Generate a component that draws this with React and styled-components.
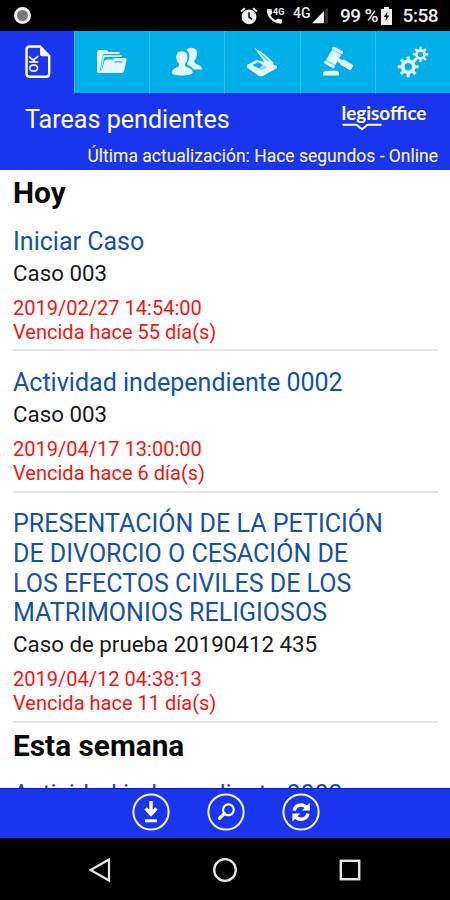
import styled, { createGlobalStyle, css } from "styled-components";

const sections = [
  {
    title: "Hoy",
    tasks: [
      {
        name: ["Iniciar Caso"],
        matter: "Caso 003",
        date: "2019/02/27 14:54:00",
        due: "Vencida hace 55 día(s)",
      },
      {
        name: ["Actividad independiente 0002"],
        matter: "Caso 003",
        date: "2019/04/17 13:00:00",
        due: "Vencida hace 6 día(s)",
      },
      {
        name: [
          "PRESENTACIÓN DE LA PETICIÓN",
          "DE DIVORCIO O CESACIÓN DE",
          "LOS EFECTOS CIVILES DE LOS",
          "MATRIMONIOS RELIGIOSOS",
        ],
        matter: "Caso de prueba 20190412 435",
        date: "2019/04/12 04:38:13",
        due: "Vencida hace 11 día(s)",
      },
    ],
  },
  {
    title: "Esta semana",
    tasks: [{ name: ["Actividad independiente 0003"] }],
  },
];

function gearPath(cx, cy, outer, inner, teeth) {
  const step = (Math.PI * 2) / teeth;
  const point = (r, a) =>
    `${(cx + r * Math.cos(a)).toFixed(2)} ${(cy + r * Math.sin(a)).toFixed(2)}`;
  let d = "";
  for (let i = 0; i < teeth; i++) {
    const a = i * step;
    d += `${i ? "L" : "M"}${point(inner, a - step * 0.27)}L${point(outer, a - step * 0.18)}`;
    d += `L${point(outer, a + step * 0.18)}L${point(inner, a + step * 0.27)}`;
  }
  return d + "Z";
}

function TaskIcon() {
  return (
    <Icon width="26" height="34" viewBox="0 0 26 34">
      <path
        d="M4.8 1.5H15L24.2 11V28.5Q24.2 31.8 20.9 31.8H4.8Q1.5 31.8 1.5 28.5V4.8Q1.5 1.5 4.8 1.5Z"
        fill="none"
        stroke="#fff"
        strokeWidth="2.4"
      />
      <path d="M15 2L24 11.2H17Q15 11.2 15 9Z" fill="#fff" />
      <OkText transform="translate(12.8 27.6) rotate(-90)" textLength="17" lengthAdjust="spacingAndGlyphs">
        OK
      </OkText>
    </Icon>
  );
}

function FolderIcon() {
  return (
    <Icon width="32" height="26" viewBox="0 0 32 26">
      <path
        d="M1 22V3Q1 1 3 1H10Q12 1 12.5 3H23.5V5H9Q6.5 5 6.2 8L4 22Z"
        fill="#e2f7ff"
      />
      <path d="M8 6.3H25.5V8H9.7Q8.2 8 7.8 10L5.4 22H4.5L6.8 8Q7 6.3 8 6.3Z" fill="#e2f7ff" />
      <path
        d="M11 10.5H17L19 9H29Q31 9 30.6 11L28 22Q27.5 24 25.5 24H3Q1 24 1 22H4.5Q5.8 22 6.2 20L8.2 12.5Q8.8 10.5 11 10.5Z"
        fill="#e2f7ff"
      />
      <path d="M18.5 12.8H26.5" stroke="#35b9e9" strokeWidth="1.4" />
    </Icon>
  );
}

function PeopleIcon() {
  return (
    <Icon width="32" height="30" viewBox="0 0 32 30">
      <path
        d="M15.5 3Q17 0.8 20.5 0.8Q26.2 1 26 7Q25.8 11 23.5 13.5V15.2Q24.5 17 28 18.2Q31 19.5 31 22.5H22.5Q21 19.5 17.3 18.3Q16 17.8 16 16.5Q18.5 13.5 18.4 9Q18.2 5 15.5 3Z"
        fill="#e2f7ff"
      />
      <path
        d="M10.8 4.2Q16.5 4.2 16.5 10.5Q16.3 14.5 14 17V18.8Q15 20.2 18.5 21.3Q21.8 22.8 21.8 25.5Q20.5 28.5 10.8 28.5Q1 28.5 .7 25.5Q1 22.5 4 21.3Q7.2 20.2 8 18.8V17Q5.2 14.3 5.2 10.5Q5.2 4.2 10.8 4.2Z"
        fill="#e2f7ff"
      />
    </Icon>
  );
}

function ScannerIcon() {
  return (
    <Icon width="32" height="30" viewBox="0 0 32 30">
      <path d="M1 18L11 12.8L31 19V21L16.5 29.2H13L1 20.6Z" fill="#e2f7ff" />
      <path d="M6.6 18L12 15L17 18L13.2 21.8Z" fill="#00aee8" />
      <path d="M18.2 18L21 20.6L15.6 23.4L13.6 22Z" fill="#8fdbf8" />
      <path d="M8 .8L18.6 7.2L27.4 15.6V18.4L19.6 16.4L11 4.6Z" fill="#e2f7ff" />
      <path d="M12.6 5L18 8.6L24.2 15L20.6 13.4Z" fill="#58c9f2" />
    </Icon>
  );
}

function GavelIcon() {
  return (
    <Icon width="32" height="30" viewBox="0 0 32 30">
      <g transform="translate(12 10.6) rotate(30)" fill="#e2f7ff">
        <rect x="-6.3" y="-9.8" width="11.6" height="3.2" rx="1" />
        <rect x="-5.6" y="-5.8" width="10.4" height="11.6" />
        <rect x="-6.3" y="6.6" width="11.6" height="3.2" rx="1" />
        <rect x="4.5" y="-1.8" width="6" height="3.6" />
        <rect x="8.5" y="-3.2" width="12.2" height="6.2" rx="1" />
      </g>
      <g transform="translate(12 10.6) rotate(30)" fill="#9be1fa">
        <rect x="-5.6" y="-6.6" width="10.4" height="0.9" />
        <rect x="-5.6" y="5.7" width="10.4" height="0.9" />
      </g>
      <path d="M3 23.8H15.5L17 25.8V28.4H1V25.8Z" fill="#e2f7ff" />
    </Icon>
  );
}

function GearsIcon() {
  return (
    <Icon width="32" height="32" viewBox="0 0 32 32">
      <path d={gearPath(11.2, 20.8, 10.5, 7.4, 8)} fill="#e2f7ff" />
      <circle cx="11.2" cy="20.8" r="3.7" fill="#00aee8" />
      <path d={gearPath(23.5, 8.4, 7.8, 5.4, 8)} fill="#e2f7ff" />
      <circle cx="23.5" cy="8.4" r="2.7" fill="#00aee8" />
    </Icon>
  );
}

const tabs = [
  { id: "tareas", icon: TaskIcon },
  { id: "carpetas", icon: FolderIcon },
  { id: "clientes", icon: PeopleIcon },
  { id: "escaner", icon: ScannerIcon },
  { id: "juzgados", icon: GavelIcon },
  { id: "ajustes", icon: GearsIcon },
];

function StatusIcons() {
  return (
    <>
      <Icon width="18" height="18" viewBox="0 0 18 18">
        <circle cx="9" cy="9.8" r="7.4" fill="#eee" />
        <path d="M1 4.5L4.8 1.2M17 4.5L13.2 1.2" stroke="#eee" strokeWidth="1.9" />
        <path d="M9 5.2V10L12 12.2" stroke="#222" strokeWidth="1.7" fill="none" />
      </Icon>
      <CallIcon width="20" height="18" viewBox="0 0 20 18">
        <path
          d="M2.2 2H5.4L6.5 6L4.6 8.2Q6.3 11.6 9.5 13.2L11.8 11.4L15.8 12.4V15.8Q15.8 16.8 14.5 16.8Q8.8 16.5 5 12.6Q1 8.5 .8 3.4Q.8 2 2.2 2Z"
          fill="#eee"
        />
        <CallText x="7" y="7.6">
          4G
        </CallText>
      </CallIcon>
      <Network>4G</Network>
      <Signal width="17" height="16" viewBox="0 0 17 16">
        <path d="M0 15.2L12 3V15.2Z" fill="#eee" />
        <path d="M13 2L16 0V15.2H13Z" fill="#333" />
      </Signal>
    </>
  );
}

export default function App() {
  return (
    <>
      <GlobalStyle />
      <Phone>
        <StatusBar>
          <Recording />
          <StatusIcons />
          <Percent>99 %</Percent>
          <Icon width="11" height="18" viewBox="0 0 11 18">
            <path d="M3 0H8V2H11V18H0V2H3Z" fill="#eee" />
            <path d="M6.6 4.5L2.8 10H5L4.4 14.3L8.3 8.6H6Z" fill="#111" />
          </Icon>
          <Clock>5:58</Clock>
        </StatusBar>
        <Tabs>
          {tabs.map(({ id, icon: TabIcon }) => (
            <Tab key={id} $active={id === "tareas"} aria-label={id}>
              <TabIcon />
            </Tab>
          ))}
        </Tabs>
        <Header>
          <HeaderRow>
            <PageTitle>Tareas pendientes</PageTitle>
            <Brand>
              <BrandName>legisoffice</BrandName>
              <Icon width="40" height="8" viewBox="0 0 40 8">
                <path d="M.5 1.8H14.5L20 6.2L25.5 1.8H39.5" fill="none" stroke="#fff" strokeWidth="2" />
              </Icon>
            </Brand>
          </HeaderRow>
          <Updated>Última actualización: Hace segundos - Online</Updated>
        </Header>
        <TaskList>
          {sections.map((section) => (
            <section key={section.title}>
              <SectionTitle>{section.title}</SectionTitle>
              {section.tasks.map((task) => (
                <Task key={task.name[0]}>
                  <TaskName>
                    {task.name.map((line) => (
                      <TaskLine key={line}>{line}</TaskLine>
                    ))}
                  </TaskName>
                  {task.matter && (
                    <>
                      <Matter>{task.matter}</Matter>
                      <Due>{task.date}</Due>
                      <Due>{task.due}</Due>
                    </>
                  )}
                </Task>
              ))}
            </section>
          ))}
        </TaskList>
        <Actions>
          <RoundButton aria-label="Descargar">
            <Icon width="38" height="38" viewBox="0 0 38 38">
              <circle cx="19" cy="19" r="17.6" fill="none" stroke="#f4f6ff" strokeWidth="2" />
              <path d="M19 8V20M13.6 15.3L19 21.3L24.4 15.3" fill="none" stroke="#fff" strokeWidth="3.4" />
              <path d="M13 27.8H25" stroke="#fff" strokeWidth="3" />
            </Icon>
          </RoundButton>
          <RoundButton aria-label="Buscar">
            <Icon width="38" height="38" viewBox="0 0 38 38">
              <circle cx="19" cy="19" r="17.6" fill="none" stroke="#f4f6ff" strokeWidth="2" />
              <circle cx="21.4" cy="16.8" r="5.4" fill="none" stroke="#fff" strokeWidth="2.2" />
              <path d="M17.3 20.6L12.6 25.3" stroke="#fff" strokeWidth="3.4" strokeLinecap="round" />
            </Icon>
          </RoundButton>
          <RoundButton aria-label="Actualizar">
            <Icon width="38" height="38" viewBox="0 0 38 38">
              <circle cx="19" cy="19" r="17.6" fill="none" stroke="#f4f6ff" strokeWidth="2" />
              <path d="M12 17.6Q13.4 12 19.2 12Q22.4 12 24.4 14.6" fill="none" stroke="#fff" strokeWidth="3.4" />
              <path d="M27.8 9.8V17.6H20Z" fill="#fff" />
              <path d="M26 20.6Q24.6 26.2 18.8 26.2Q15.6 26.2 13.6 23.6" fill="none" stroke="#fff" strokeWidth="3.4" />
              <path d="M10.4 28.4V20.6H18.2Z" fill="#fff" />
            </Icon>
          </RoundButton>
        </Actions>
        <NavBar>
          <Icon width="26" height="26" viewBox="0 0 26 26">
            <path d="M22 2.5V23.5L3.6 13Z" fill="none" stroke="#e6e6e6" strokeWidth="2.2" />
          </Icon>
          <Icon width="26" height="26" viewBox="0 0 26 26">
            <circle cx="13" cy="13" r="10.8" fill="none" stroke="#e6e6e6" strokeWidth="2.3" />
          </Icon>
          <Icon width="26" height="26" viewBox="0 0 26 26">
            <rect x="3.8" y="3.8" width="18.4" height="18.4" fill="none" stroke="#e6e6e6" strokeWidth="2.4" />
          </Icon>
        </NavBar>
      </Phone>
    </>
  );
}

const GlobalStyle = createGlobalStyle`
  * {
    box-sizing: border-box;
  }
  body {
    margin: 0;
    background: #000;
    font-family: Roboto, sans-serif;
  }
`;

const Icon = styled.svg`
  display: block;
  flex: none;
`;

const Phone = styled.main`
  display: flex;
  flex-direction: column;
  width: 450px;
  height: 900px;
  overflow: hidden;
  background: #fff;
`;

const StatusBar = styled.div`
  display: flex;
  align-items: center;
  flex: none;
  height: 30.5px;
  padding: 1px 12px 0 14px;
  background: #000;
  color: #eee;
`;

const Recording = styled.span`
  width: 17px;
  height: 17px;
  margin-right: 209px;
  border: 3.5px solid #f2f2f2;
  border-radius: 50%;
  background: #777;
`;

const CallIcon = styled(Icon)`
  margin-left: 8px;
`;

const CallText = styled.text`
  font-family: Roboto, sans-serif;
  font-size: 9px;
  font-weight: 700;
  fill: #eee;
`;

const OkText = styled.text`
  font-family: Roboto, sans-serif;
  font-size: 12px;
  font-weight: 500;
  fill: #fff;
`;

const Network = styled.span`
  margin: -6px 0 0 7px;
  width: 19px;
  font-size: 14px;
  font-weight: 500;
  line-height: 14px;
`;

const Signal = styled(Icon)`
  margin: 0 11px 0 0;
`;

const Percent = styled.span`
  width: 41px;
  font-size: 19px;
  font-weight: 500;
  letter-spacing: -0.6px;
  white-space: nowrap;
`;

const Clock = styled.span`
  margin-left: auto;
  font-size: 19px;
  font-weight: 500;
  letter-spacing: -0.5px;
`;

const Tabs = styled.nav`
  display: grid;
  grid-template-columns: 74px repeat(5, 1fr);
  flex: none;
  height: 63.5px;
  background: #1a35ee;
`;

const Tab = styled.button`
  display: flex;
  align-items: center;
  justify-content: center;
  padding: 0;
  border: 0;
  border-left: 1px solid #2fc0f2;
  border-bottom: 1px solid #0a1ce0;
  background: #00aee8;
  ${({ $active }) =>
    $active &&
    css`
      border-color: #1a35ee;
      background: #1a35ee;
    `}
`;

const Header = styled.header`
  flex: none;
  height: 76px;
  padding: 9px 12px 0 25px;
  background: #1a35ee;
  color: #fff;
`;

const HeaderRow = styled.div`
  display: flex;
  justify-content: space-between;
  height: 41.5px;
`;

const PageTitle = styled.h1`
  margin: 0;
  font-size: 25.1px;
  font-weight: 400;
  line-height: 34px;
`;

const Brand = styled.div`
  width: 96.5px;
`;

const BrandName = styled.div`
  font-family: Lato, sans-serif;
  font-size: 18.9px;
  font-weight: 700;
  line-height: 20px;
`;

const Updated = styled.p`
  margin: 0;
  font-size: 17.5px;
  line-height: 22px;
  text-align: right;
  white-space: nowrap;
`;

const TaskList = styled.div`
  flex: 1;
  min-height: 0;
  padding: 0 12px 0 13px;
  overflow: hidden;
`;

const SectionTitle = styled.h2`
  height: 40.3px;
  margin: 0;
  padding-top: 5px;
  font-size: 29.8px;
  font-weight: 700;
  line-height: 35px;
  color: #080808;
`;

const Task = styled.article`
  padding: 16.8px 0 5.6px;
  border-bottom: 2px solid #e6e8e8;
`;

const TaskName = styled.h3`
  margin: 0 0 3.2px;
  font-size: 25.04px;
  font-weight: 400;
  line-height: 29.6px;
  color: #1552a4;
`;

const TaskLine = styled.span`
  display: block;
  white-space: nowrap;
`;

const Matter = styled.p`
  margin: 0 0 9px;
  font-size: 22.3px;
  line-height: 27px;
  color: #1a1a1a;
`;

const Due = styled.p`
  margin: 0;
  font-size: 20.05px;
  line-height: 24px;
  color: #f41414;
`;

const Actions = styled.footer`
  display: flex;
  align-items: center;
  justify-content: center;
  gap: 37px;
  flex: none;
  height: 50.5px;
  padding: 0 0 3px 1px;
  border-top: 1px solid #0a1cd0;
  background: #1a35ee;
`;

const RoundButton = styled.button`
  padding: 0;
  border: 0;
  background: none;
`;

const NavBar = styled.nav`
  display: flex;
  align-items: center;
  justify-content: space-between;
  flex: none;
  height: 62px;
  padding: 2px 87px 0;
  background: #000;
`;
